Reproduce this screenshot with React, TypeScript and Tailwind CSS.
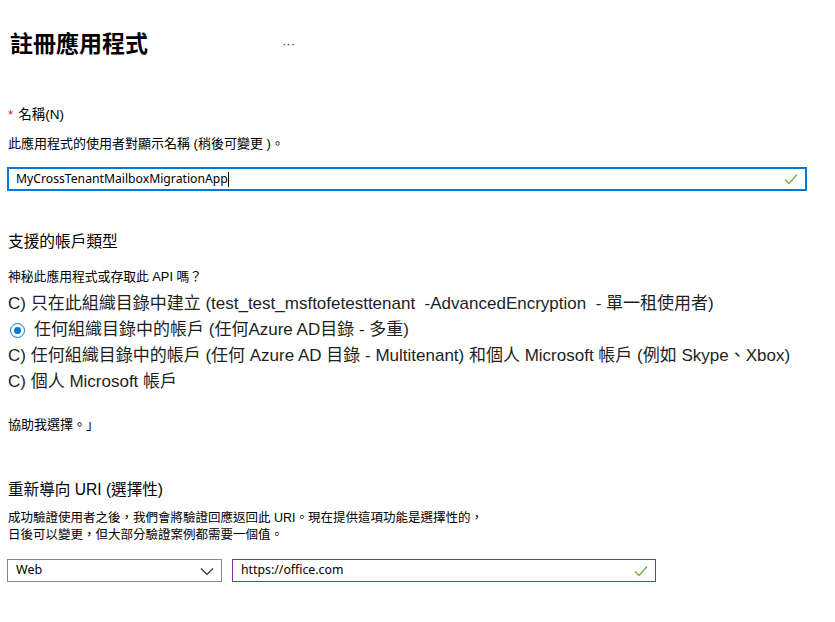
const cjk = "font-['Liberation_Sans','Noto_Sans_CJK_TC',sans-serif]";
const ui = "font-['Noto_Sans','Noto_Sans_CJK_TC',sans-serif]";

function Check() {
  return (
    <svg width="14" height="12" viewBox="0 0 14 12" className="shrink-0">
      <path d="M1 6.5 L5 10.5 L13 1.5" fill="none" stroke="#6bb23a" strokeWidth="1.3" />
    </svg>
  );
}

function Chevron() {
  return (
    <svg width="14" height="10" viewBox="0 0 14 10" className="shrink-0">
      <path d="M1 2.5 L7 8.5 L13 2.5" fill="none" stroke="#323130" strokeWidth="1.2" />
    </svg>
  );
}

export default function App() {
  const options = [
    "C) 只在此組織目錄中建立 (test_test_msftofetesttenant  -AdvancedEncryption  - 單一租使用者)",
    "任何組織目錄中的帳戶 (任何Azure AD目錄 - 多重)",
    "C) 任何組織目錄中的帳戶 (任何 Azure AD 目錄 - Multitenant) 和個人 Microsoft 帳戶 (例如 Skype、Xbox)",
    "C) 個人 Microsoft 帳戶",
  ];

  return (
    <div className={`w-[835px] h-[622px] bg-white text-black ${cjk} overflow-hidden`}>
      {/* Header */}
      <div className="flex items-center pt-[32px] pl-[10px]">
        <h1 className="text-[23px] leading-[24px] font-bold w-[272px]">註冊應用程式</h1>
        <span className="text-[13px] leading-[24px] text-[#323130]">···</span>
      </div>

      {/* Name */}
      <div className="mt-[49px] pl-[8px] text-[13.5px] leading-[20px]">
        <span className="text-[#e81123] mr-[5px]">*</span>
        名稱(N)
      </div>
      <div className="mt-[10px] pl-[8px] text-[13px] leading-[18px]">此應用程式的使用者對顯示名稱 (稍後可變更 )。</div>
      <div className="mt-[14px] ml-[7px] w-[800px] h-[24px] border-2 border-[#0078d4] flex items-center px-[7px]">
        <span className={`${ui} text-[12.2px] flex-1`}>
          MyCrossTenantMailboxMigrationApp<span className="inline-block w-px h-[15px] bg-black align-middle" />
        </span>
        <Check />
      </div>

      {/* Account types */}
      <div className="mt-[40px] pl-[8px] text-[15.7px] leading-[22px]">支援的帳戶類型</div>
      <div className="mt-[15px] pl-[8px] text-[12.8px] leading-[18px]">神秘此應用程式或存取此 API 嗎？</div>
      <div className="mt-[5px] pl-[8px] text-[17px] leading-[26px] text-[#201f1e]">
        {options.map((o, i) =>
          i === 1 ? (
            <div key={i} className="flex items-center gap-[9px] pl-[2px]">
              <span className="w-[15px] h-[15px] rounded-full border border-[#0078d4] flex items-center justify-center">
                <span className="w-[7px] h-[7px] rounded-full bg-[#0078d4]" />
              </span>
              <span>{o}</span>
            </div>
          ) : (
            <div key={i} className="whitespace-pre">{o}</div>
          )
        )}
      </div>
      <div className="mt-[21px] pl-[8px] text-[13px] leading-[18px]">協助我選擇。」</div>

      {/* Redirect URI */}
      <div className="mt-[45px] pl-[8px] text-[15.6px] leading-[22px]">重新導向 URI (選擇性)</div>
      <div className="mt-[9px] pl-[8px] text-[12.5px] leading-[17px]">
        <div>成功驗證使用者之後，我們會將驗證回應返回此 URI。現在提供這項功能是選擇性的，</div>
        <div>日後可以變更，但大部分驗證案例都需要一個值。</div>
      </div>
      <div className="mt-[15px] ml-[7px] flex gap-[10px]">
        <div className="w-[215px] h-[23px] border border-[#8a8886] flex items-center justify-between pl-[8px] pr-[7px]">
          <span className={`${ui} text-[12.5px]`}>Web</span>
          <Chevron />
        </div>
        <div className="w-[424px] h-[23px] border border-[#8a2da5] flex items-center justify-between pl-[8px] pr-[7px]">
          <span className={`${ui} text-[12.3px]`}>https://office.com</span>
          <Check />
        </div>
      </div>
    </div>
  );
}
